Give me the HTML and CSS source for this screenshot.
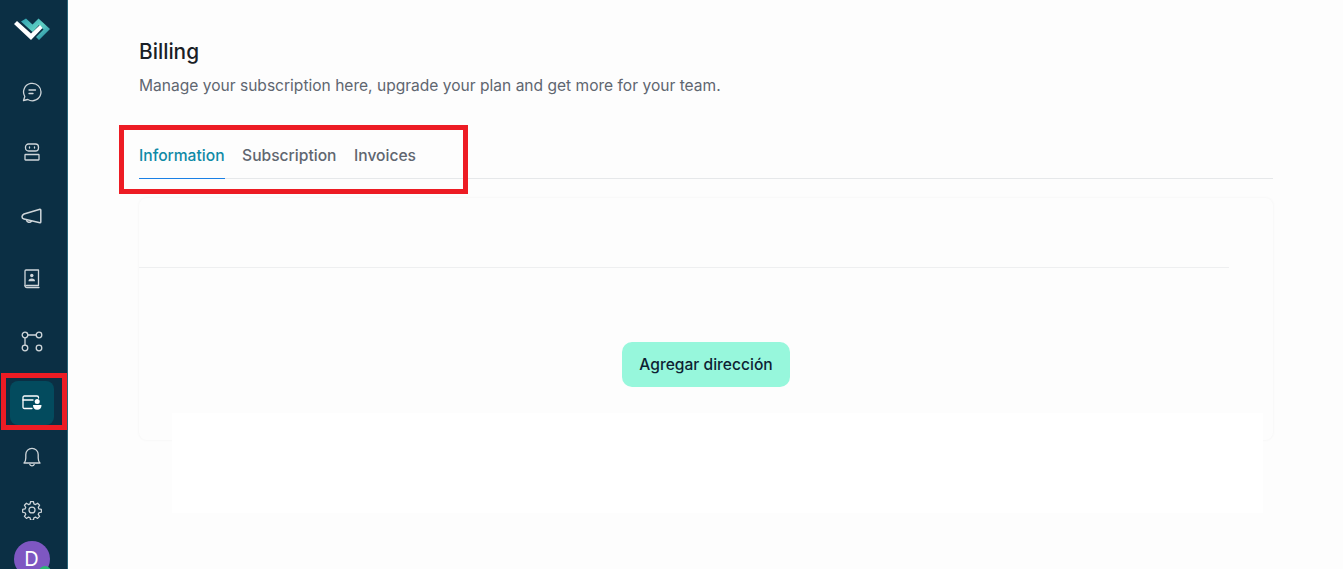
FILE: index.html
```html
<!DOCTYPE html>
<html lang="en">
<head>
    <meta charset="UTF-8">
    <meta name="viewport" content="width=device-width, initial-scale=1.0">
    <title>Billing</title>
    <link rel="stylesheet" href="styles.css">
</head>
<body>
    <aside class="sidebar">
        <a class="nav-item" href="#">
            <svg class="logo" width="36" height="24" viewBox="0 0 36 24">
                <defs>
                    <linearGradient id="logoTeal" x1="0" y1="0" x2="1" y2="1">
                        <stop offset="0" stop-color="#2f9fb0"/>
                        <stop offset="0.5" stop-color="#5fd0c4"/>
                        <stop offset="1" stop-color="#1c7f9b"/>
                    </linearGradient>
                </defs>
                <path d="M7 3.500 L12 0.500 L18.500 6.500 L24.500 0.500 L36 11 L25 22 L22 19 L29.500 11.500 L25 7 L18.500 14 Z" fill="url(#logoTeal)"/>
                <path d="M0 6 L3 3 L17 15.500 L26 7 L28.500 10 L17 22 Z" fill="#fff"/>
            </svg>
        </a>
        <a class="nav-item" href="#">
            <svg width="20" height="20" viewBox="0 0 20 20" fill="none" stroke="#cfd6da" stroke-width="1.300" stroke-linecap="round" stroke-linejoin="round">
                <path d="M1.500 18.500 L2.800 14.500 A8.700 8.700 0 1 1 5.800 17.500 Z"/>
                <path d="M7 8h6.500M7 11.500h4"/>
            </svg>
        </a>
        <a class="nav-item" href="#">
            <svg width="16" height="18" viewBox="0 0 16 18" fill="none" stroke="#cfd6da" stroke-width="1.300" stroke-linecap="round" stroke-linejoin="round">
                <rect x="1.500" y="1" width="13" height="7" rx="3"/>
                <rect x="1" y="11.500" width="14" height="5.500" rx="0.500"/>
                <path d="M5.500 4v1M10.500 4v1"/>
            </svg>
        </a>
        <a class="nav-item" href="#">
            <svg width="21" height="18" viewBox="0 0 21 18" fill="none" stroke="#cfd6da" stroke-width="1.500" stroke-linecap="round" stroke-linejoin="round">
                <path d="M19 1.200 L3 6 Q1 7 1 8.800 Q1 10.500 3 11 L19 14.800 Q19.800 14.800 19.800 14 V2 Q19.800 1.200 19 1.200 Z"/>
                <path d="M5.500 11.800 A2.700 2.700 0 0 0 10.500 13"/>
            </svg>
        </a>
        <a class="nav-item" href="#">
            <svg width="16" height="20" viewBox="0 0 16 20" fill="none" stroke="#cfd6da" stroke-width="1.300" stroke-linecap="round" stroke-linejoin="round">
                <path d="M1 16.500 V2 Q1 1 2 1 H14.500 V16.500 H2.500"/>
                <path d="M1 16.500 Q1 18.500 3 18.500 H15"/>
                <circle cx="7.800" cy="6.500" r="1.700" fill="#cfd6da" stroke="none"/>
                <path d="M4.500 12.200 Q4.500 9.500 7.800 9.500 Q11 9.500 11 12.200 Z" fill="#cfd6da" stroke="none"/>
            </svg>
        </a>
        <a class="nav-item" href="#">
            <svg width="22" height="21" viewBox="0 0 22 21" fill="none" stroke="#cfd6da" stroke-width="1.300" stroke-linecap="round">
                <circle cx="4" cy="4" r="2.800"/>
                <circle cx="18" cy="4" r="2.800"/>
                <circle cx="4" cy="17" r="2.800"/>
                <circle cx="18" cy="17" r="2.800"/>
                <path d="M6.800 4h8.400M4 6.800v7.400"/>
            </svg>
        </a>
        <a class="nav-item active" href="#">
            <svg width="20" height="16" viewBox="0 0 20 16" fill="none" stroke="#fff" stroke-width="1.300" stroke-linecap="round" stroke-linejoin="round">
                <path d="M10 13.500 H2.500 Q1 13.500 1 12 V2.500 Q1 1 2.500 1 H15 Q16.500 1 16.500 2.500 V3"/>
                <path d="M1 5h10"/>
                <circle cx="15.200" cy="6.500" r="2.500" fill="#fff" stroke="none"/>
                <path d="M11 10 H19.500 Q19.500 14.800 15.200 14.800 Q11 14.800 11 10 Z" fill="#fff" stroke="none"/>
            </svg>
        </a>
        <a class="nav-item" href="#">
            <svg width="18" height="21" viewBox="0 0 18 21" fill="none" stroke="#cfd6da" stroke-width="1.300" stroke-linecap="round" stroke-linejoin="round">
                <path d="M1 16 Q2.800 14.500 2.800 11 V7.500 A6.200 6.200 0 0 1 15.200 7.500 V11 Q15.200 14.500 17 16 Z"/>
                <path d="M6.800 17.500 A2.400 2.400 0 0 0 11.200 17.500"/>
            </svg>
        </a>
        <a class="nav-item" href="#">
            <svg width="20" height="20" viewBox="0 0 24 24" fill="none" stroke="#cfd6da" stroke-width="1.500" stroke-linecap="round" stroke-linejoin="round">
                <path d="M10.300 1.300h3.400l.6 2.900 1.900.8 2.500-1.600 2.400 2.400-1.600 2.500.8 1.900 2.900.6v3.400l-2.900.6-.8 1.900 1.600 2.500-2.400 2.400-2.500-1.600-1.900.8-.6 2.900h-3.400l-.6-2.900-1.900-.8-2.500 1.600-2.400-2.400 1.600-2.500-.8-1.900-2.900-.6v-3.400l2.900-.6.8-1.900-1.600-2.500 2.400-2.400 2.500 1.600 1.900-.8z" transform="translate(0 .5)"/>
                <circle cx="12" cy="12" r="3.600"/>
            </svg>
        </a>
        <div class="nav-item">
            <span class="avatar">D<span class="avatar-dot"></span></span>
        </div>
    </aside>

    <main class="content">
        <h1 class="title">Billing</h1>
        <p class="subtitle">Manage your subscription here, upgrade your plan and get more for your team.</p>

        <nav class="tabs">
            <a class="tab tab-active" href="#">Information</a>
            <a class="tab" href="#">Subscription</a>
            <a class="tab" href="#">Invoices</a>
        </nav>

        <section class="card">
            <div class="card-head"></div>
            <div class="card-body">
                <button class="btn-primary" type="button">Agregar dirección</button>
            </div>
            <div class="card-cover"></div>
        </section>
    </main>

    <!-- red annotation boxes drawn over the screenshot -->
    <div class="mark mark-nav"></div>
    <div class="mark mark-tabs"></div>
</body>
</html>
```

FILE: styles.css
```css
* {
    box-sizing: border-box;
}
html, body {
    height: 100%;
}
body {
    margin: 0;
    display: flex;
    overflow: hidden;
    font-family: Inter, "Liberation Sans", sans-serif;
    background-color: #fdfdfd;
    color: #1a1f26;
}

/* sidebar */
.sidebar {
    flex: 0 0 68px;
    height: 569px;
    display: grid;
    grid-template-rows: 60px 64px 56px 74px 50px 74px 50px 58px 48px 50px;
    justify-items: center;
    align-items: center;
    background-color: #0b2f44;
    border-right: 1px solid #2a6478;
}
.nav-item {
    display: flex;
    align-items: center;
    justify-content: center;
    width: 44px;
    height: 44px;
    margin-right: 4px;
    border-radius: 8px;
}
.nav-item.active {
    background-color: #034b5e;
}
.logo {
    margin-left: 1px;
}
.avatar {
    position: relative;
    flex: 0 0 36px;
    width: 36px;
    height: 36px;
    line-height: 37px;
    text-align: center;
    border-radius: 50%;
    background-color: #7e57c2;
    color: #fff;
    font-size: 20px;
}
.avatar-dot {
    position: absolute;
    right: -1px;
    bottom: -1px;
    width: 12px;
    height: 12px;
    border-radius: 50%;
    background-color: #2bb673;
}

/* main column */
.content {
    flex: 1;
    min-width: 0;
    padding: 40px 70px 0 71px;
}
.title {
    margin: 0;
    font-size: 20.800px;
    line-height: 24px;
    font-weight: 500;
    color: #1a1f26;
}
.subtitle {
    margin: 11px 0 0;
    font-size: 15.570px;
    line-height: 22px;
    color: #5f6670;
}

/* tabs */
.tabs {
    display: flex;
    gap: 17.600px;
    height: 47px;
    margin-top: 35px;
    border-bottom: 1px solid #e6e8ea;
}
.tab {
    height: 47px;
    padding-top: 14px;
    font-size: 15.600px;
    line-height: 20px;
    font-weight: 500;
    color: #5f6670;
    text-decoration: none;
}
.tab-active {
    color: #0f8aa6;
    border-bottom: 1px solid #1a80e5;
}

/* card */
.card {
    position: relative;
    height: 242px;
    margin-top: 19px;
    border-radius: 8px;
    box-shadow: 0 0 3px rgba(0, 0, 0, 0.05);
}
.card-head {
    height: 70px;
    margin-right: 44px;
    border-bottom: 1px solid #eeeff0;
}
.card-body {
    display: flex;
    justify-content: center;
    padding-top: 74px;
}
.btn-primary {
    width: 168px;
    height: 45px;
    border: 0;
    border-radius: 10px;
    background-color: #97f7dc;
    font-family: inherit;
    font-size: 15.600px;
    font-weight: 500;
    color: #0e1f33;
}
.card-cover {
    position: absolute;
    left: 33px;
    right: 10px;
    top: 215px;
    height: 100px;
    background-color: #fff;
}

/* annotations */
.mark {
    position: absolute;
    border: 5px solid #ed1c24;
}
.mark-nav {
    left: 1px;
    top: 373px;
    width: 66px;
    height: 57px;
}
.mark-tabs {
    left: 119px;
    top: 125px;
    width: 349px;
    height: 69px;
}
```
